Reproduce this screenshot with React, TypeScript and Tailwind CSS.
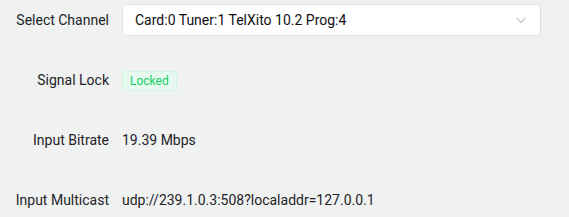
import React from 'react'

const rows = [
  { label: 'Signal Lock', kind: 'tag', value: 'Locked' },
  { label: 'Input Bitrate', kind: 'text', value: '19.39 Mbps' },
  { label: 'Input Multicast', kind: 'text', value: 'udp://239.1.0.3:508?localaddr=127.0.0.1' },
]

const App: React.FC = () => {
  return (
    <div className="w-[569px] h-[217px] bg-[#f0f2f2] pt-[4px] text-[14px] text-[#1f2328] font-['Roboto',sans-serif] flex flex-col gap-[28px]">
      {/* channel select */}
      <div className="flex items-center h-[32px]">
        <div className="w-[110px] text-right pr-[1px]">Select Channel</div>
        <div className="ml-[12px] w-[419px] h-[32px] bg-white border border-[#dcdfe6] rounded-[4px] flex items-center pl-[12px] pr-[13px] justify-between">
          <span className="text-[#111]">Card:0 Tuner:1 TelXito 10.2 Prog:4</span>
          <svg width="12" height="12" viewBox="0 0 12 12" fill="none">
            <path d="M1.5 4 L6 8.5 L10.5 4" stroke="#c0c4cc" strokeWidth="1.2" />
          </svg>
        </div>
      </div>

      {rows.map((r) => (
        <div key={r.label} className="flex items-center h-[32px]">
          <div className="w-[110px] text-right pr-[1px]">{r.label}</div>
          <div className="ml-[12px]">
            {r.kind === 'tag' ? (
              <span className="inline-flex items-center h-[20px] px-[7px] text-[12px] rounded-[3px] bg-[#e7faf0] border border-[#d0f5e0] text-[#13ce66]">
                {r.value}
              </span>
            ) : (
              <span>{r.value}</span>
            )}
          </div>
        </div>
      ))}
    </div>
  )
}

export default App
